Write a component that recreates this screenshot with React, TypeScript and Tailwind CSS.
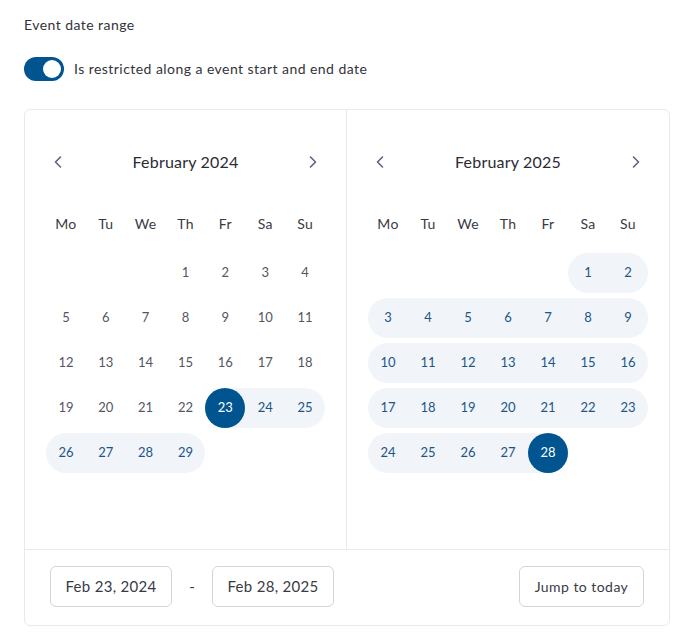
import React from "react";

type Cal = { title: string; offset: number; days: number; rangeFrom: number; rangeTo: number; selected: number };

const WEEK = ["Mo", "Tu", "We", "Th", "Fr", "Sa", "Su"];

function ChevronLeft() {
  return (
    <svg width="24" height="24" viewBox="0 0 24 24" fill="none" stroke="#5b6381" strokeWidth="1.6" strokeLinecap="round" strokeLinejoin="round">
      <path d="M14.5 7 9.5 12l5 5" />
    </svg>
  );
}
function ChevronRight() {
  return (
    <svg width="24" height="24" viewBox="0 0 24 24" fill="none" stroke="#5b6381" strokeWidth="1.6" strokeLinecap="round" strokeLinejoin="round">
      <path d="M9.5 7l5 5-5 5" />
    </svg>
  );
}

function Calendar({ cal, border }: { cal: Cal; border: boolean }) {
  const cells: (number | null)[] = [];
  for (let i = 0; i < cal.offset; i++) cells.push(null);
  for (let d = 1; d <= cal.days; d++) cells.push(d);
  while (cells.length % 7) cells.push(null);
  const rows: (number | null)[][] = [];
  for (let i = 0; i < cells.length; i += 7) rows.push(cells.slice(i, i + 7));

  return (
    <div className={`px-[21px] pt-[32px] pb-[76px] ${border ? "border-r border-[#e8e9ec]" : ""}`}>
      <div className="flex h-10 items-center justify-between">
        <button className="flex h-6 w-6 items-center justify-center">
          <ChevronLeft />
        </button>
        <div className="text-[16px] tracking-[0.2px] text-[#2b2b33]">{cal.title}</div>
        <button className="flex h-6 w-6 items-center justify-center">
          <ChevronRight />
        </button>
      </div>
      <div className="mt-[21px] grid h-10 grid-cols-7 items-center">
        {WEEK.map((w) => (
          <div key={w} className="text-center text-[14px] tracking-[0.3px] text-[#3a3a44]">
            {w}
          </div>
        ))}
      </div>
      <div className="mt-[10px] flex flex-col gap-[5px]">
        {rows.map((row, ri) => (
          <div key={ri} className="grid h-10 grid-cols-7">
            {row.map((d, ci) => {
              if (d === null) return <div key={ci} />;
              const inRange = d >= cal.rangeFrom && d <= cal.rangeTo;
              const roundL = ci === 0 || d === cal.rangeFrom || d === 1;
              const roundR = ci === 6 || d === cal.rangeTo || d === cal.days;
              const sel = d === cal.selected;
              return (
                <div
                  key={ci}
                  className={`flex h-10 items-center justify-center ${inRange ? "bg-[#f1f4f8]" : ""} ${
                    inRange && roundL ? "rounded-l-full" : ""
                  } ${inRange && roundR ? "rounded-r-full" : ""}`}
                >
                  {sel ? (
                    <div className="flex h-10 w-10 items-center justify-center rounded-full bg-[#00548f] text-[13px] text-white">
                      {d}
                    </div>
                  ) : (
                    <span className={`text-[13px] ${inRange ? "text-[#1b5688]" : "text-[#55555f]"}`}>{d}</span>
                  )}
                </div>
              );
            })}
          </div>
        ))}
      </div>
    </div>
  );
}

export default function App() {
  const cals: Cal[] = [
    { title: "February 2024", offset: 3, days: 29, rangeFrom: 23, rangeTo: 29, selected: 23 },
    { title: "February 2025", offset: 5, days: 28, rangeFrom: 1, rangeTo: 28, selected: 28 },
  ];
  return (
    <div className="min-h-[639px] bg-white px-[24px] pt-[15px]" style={{ fontFamily: "Lato, 'Noto Sans', sans-serif" }}>
      <div className="text-[14px] leading-5 tracking-[0.45px] text-[#33333b]">Event date range</div>
      <div className="mt-[22px] flex items-center gap-[10px]">
        <div className="relative h-6 w-10 rounded-full bg-[#00548f]">
          <div className="absolute right-[3px] top-[3px] h-[18px] w-[18px] rounded-full bg-white" />
        </div>
        <div className="-mt-[2px] text-[14px] tracking-[0.45px] text-[#33333b]">Is restricted along a event start and end date</div>
      </div>
      <div className="mt-[28px] w-[646px] rounded-[6px] border border-[#e8e9ec]">
        <div className="grid grid-cols-2">
          <Calendar cal={cals[0]} border />
          <Calendar cal={cals[1]} border={false} />
        </div>
        <div className="flex items-center justify-between border-t border-[#e8e9ec] px-[25px] pb-[18px] pt-[16px]">
          <div className="flex items-center">
            <div className="flex h-[41px] w-[122px] items-center justify-center rounded-[6px] border border-[#d3d5da] text-[15px] tracking-[0.3px] text-[#3a3a44]">
              Feb 23, 2024
            </div>
            <div className="w-[40px] text-center text-[15px] text-[#3a3a44]">-</div>
            <div className="flex h-[41px] w-[122px] items-center justify-center rounded-[6px] border border-[#d3d5da] text-[15px] tracking-[0.3px] text-[#3a3a44]">
              Feb 28, 2025
            </div>
          </div>
          <button className="flex h-[41px] w-[125px] items-center justify-center rounded-[6px] border border-[#d3d5da] text-[14px] tracking-[0.45px] text-[#3a3a44]">
            Jump to today
          </button>
        </div>
      </div>
    </div>
  );
}
